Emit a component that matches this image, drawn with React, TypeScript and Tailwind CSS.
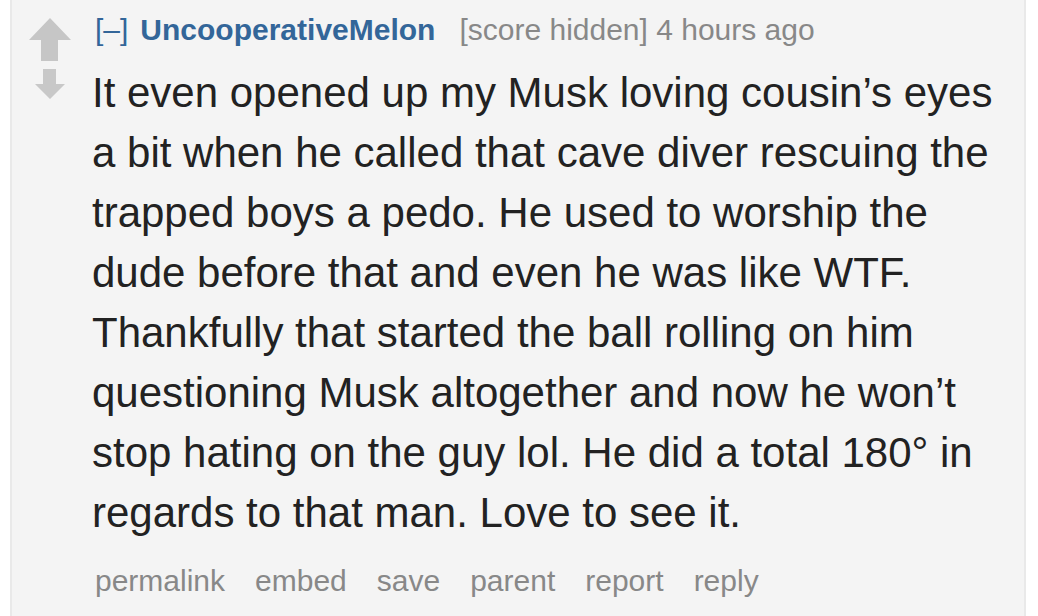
import React from 'react';

const lines = [
  'It even opened up my Musk loving cousin\u2019s eyes',
  'a bit when he called that cave diver rescuing the',
  'trapped boys a pedo. He used to worship the',
  'dude before that and even he was like WTF.',
  'Thankfully that started the ball rolling on him',
  'questioning Musk altogether and now he won\u2019t',
  'stop hating on the guy lol. He did a total 180\u00b0 in',
  'regards to that man. Love to see it.',
];

const buttons = ['permalink', 'embed', 'save', 'parent', 'report', 'reply'];

function Arrows() {
  return (
    <div className="flex w-[62px] flex-col items-center pt-[18px]">
      {/* up arrow */}
      <svg width="44" height="43" viewBox="0 0 44 43">
        <path d="M22 0 L43 22 L30 22 L30 43 L13 43 L13 22 L1 22 Z" fill="#c6c6c6" />
      </svg>
      {/* down arrow */}
      <svg width="32" height="31" viewBox="0 0 32 31" className="mt-[8px]">
        <path d="M9 0 L22 0 L22 15 L31 15 L16 30 L1 15 L9 15 Z" fill="#c8c8c8" />
      </svg>
    </div>
  );
}

export default function App() {
  return (
    <div className="h-[616px] w-[1038px] bg-white" style={{ fontFamily: '"Liberation Sans", Arial, sans-serif' }}>
      <div className="ml-[10px] flex h-full w-[1016px] border-x-2 border-[#e9e9e9] bg-[#f4f4f4] pl-[7px]">
        <Arrows />
        <div className="flex flex-col pl-[11px]">
          <div className="ml-[3px] mt-[10px] flex items-baseline text-[30px] leading-[40px]">
            <span className="text-[#369]">[–]</span>
            <span className="ml-[12px] font-bold text-[#336699]">UncooperativeMelon</span>
            <span className="ml-[24px] text-[#888]">[score hidden] 4 hours ago</span>
          </div>
          <p className="mt-[13px] text-[42px] leading-[60px] text-[#222]">
            {lines.map((l, i) => (
              <React.Fragment key={i}>
                {l}
                {i < lines.length - 1 && <br />}
              </React.Fragment>
            ))}
          </p>
          <ul className="ml-[3px] mt-[18px] flex gap-[30px] text-[30px] leading-[40px] text-[#888]">
            {buttons.map((b) => (
              <li key={b}>{b}</li>
            ))}
          </ul>
        </div>
      </div>
    </div>
  );
}
